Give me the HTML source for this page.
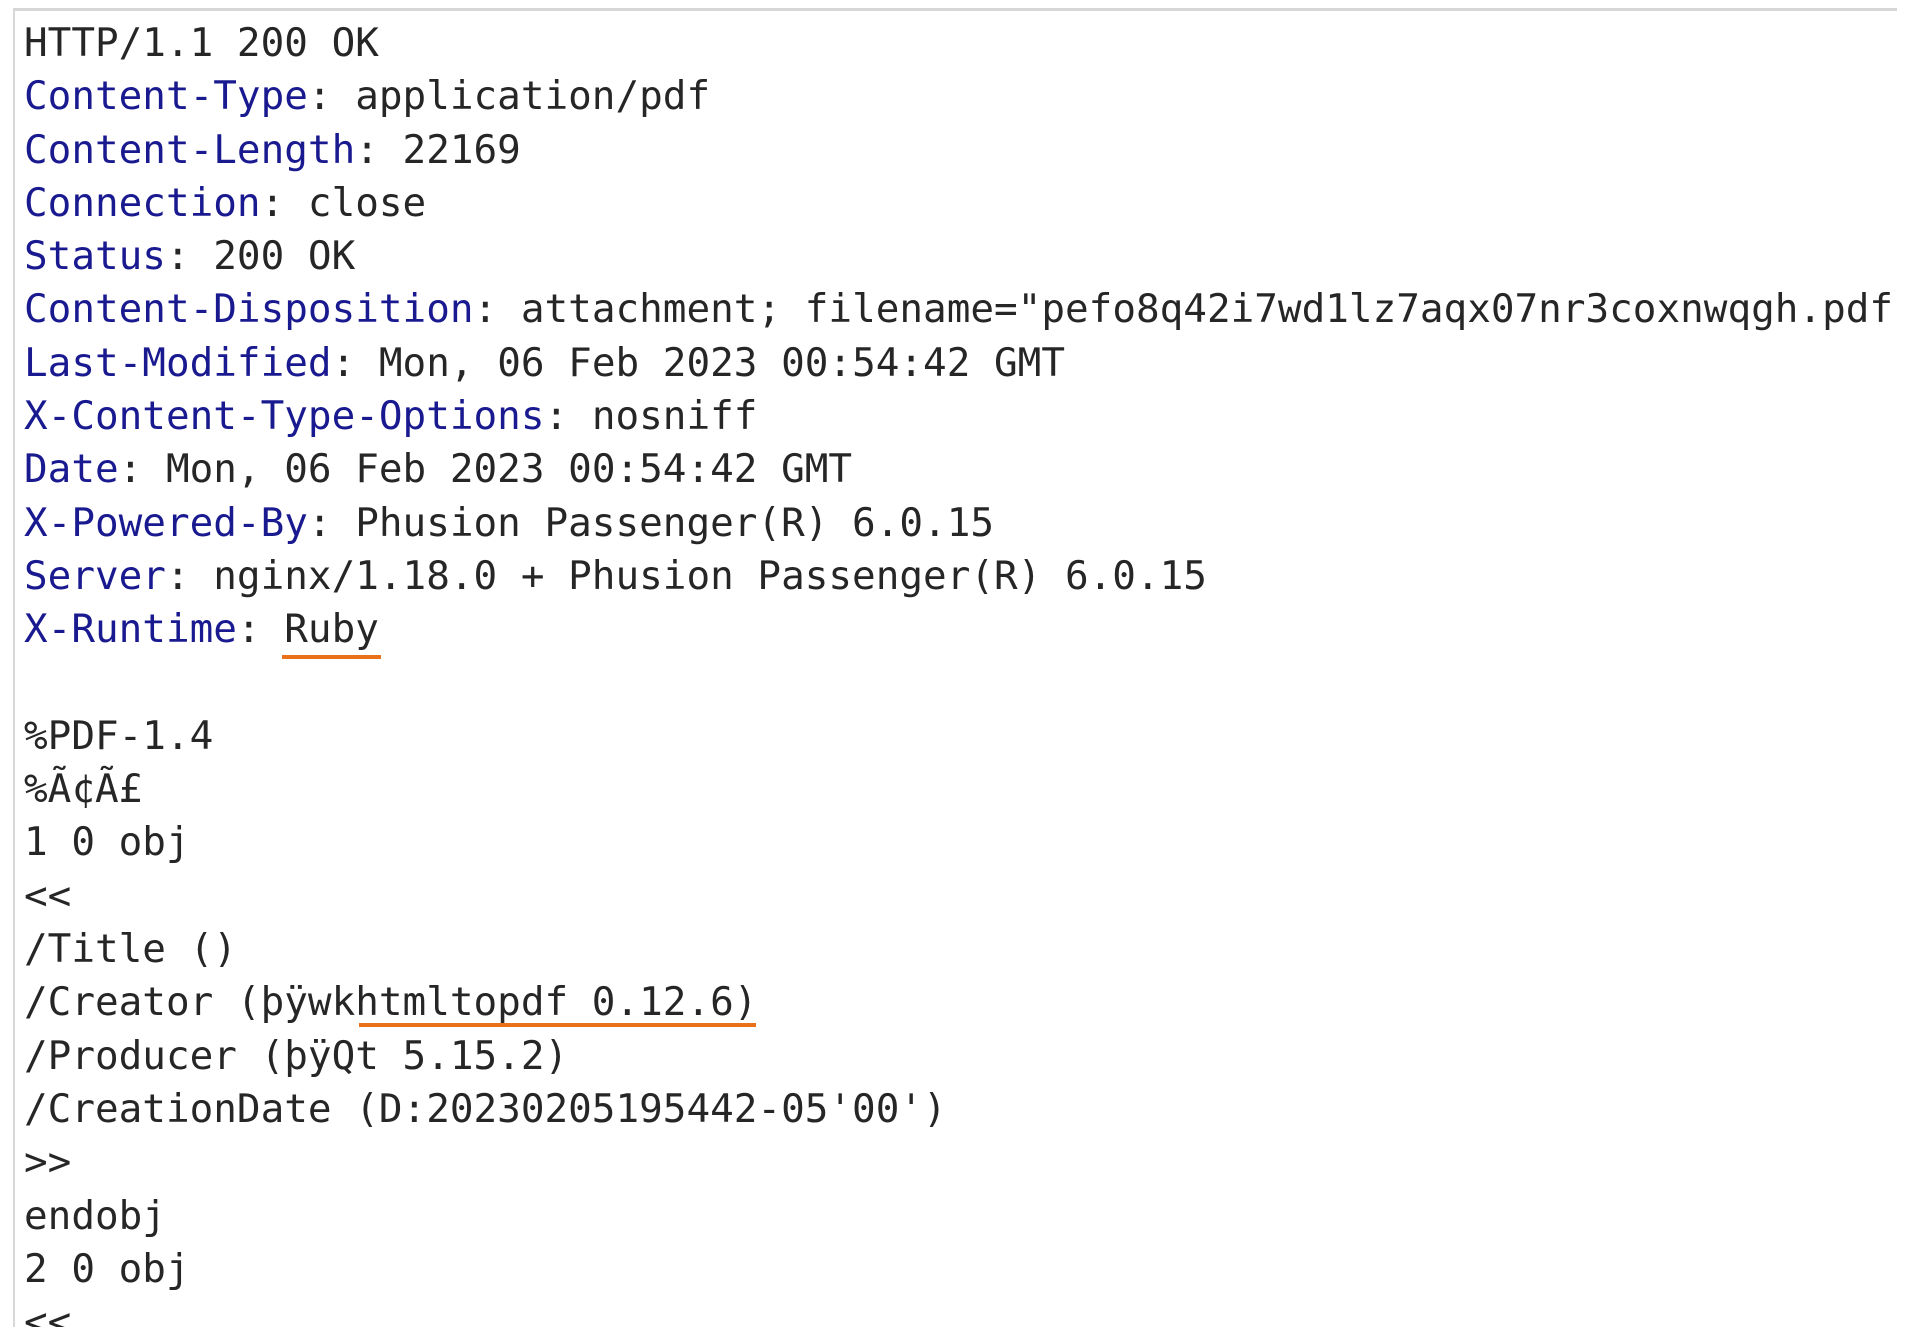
<!DOCTYPE html>
<html><head><meta charset="utf-8"><style>
html,body{margin:0;padding:0;background:#fff;width:1911px;height:1330px;overflow:hidden}
.box{position:absolute;left:13px;top:8px;width:1882px;height:1316px;border-top:3px solid #d4d6d8;border-left:2px solid #d8d8d8;overflow:hidden}
pre{margin:0;position:absolute;left:9px;top:6px;font-family:"DejaVu Sans Mono","Liberation Mono",monospace;font-size:39.3px;line-height:53.3px;color:#262626;white-space:pre}
.k{color:#1a1a90}
.u{position:absolute;height:4px;background:#e8711a}
</style></head><body>
<div class="box"><pre>HTTP/1.1 200 OK
<span class="k">Content-Type</span>: application/pdf
<span class="k">Content-Length</span>: 22169
<span class="k">Connection</span>: close
<span class="k">Status</span>: 200 OK
<span class="k">Content-Disposition</span>: attachment; filename="pefo8q42i7wd1lz7aqx07nr3coxnwqgh.pdf"
<span class="k">Last-Modified</span>: Mon, 06 Feb 2023 00:54:42 GMT
<span class="k">X-Content-Type-Options</span>: nosniff
<span class="k">Date</span>: Mon, 06 Feb 2023 00:54:42 GMT
<span class="k">X-Powered-By</span>: Phusion Passenger(R) 6.0.15
<span class="k">Server</span>: nginx/1.18.0 + Phusion Passenger(R) 6.0.15
<span class="k">X-Runtime</span>: Ruby

%PDF-1.4
%Ã¢Ã£
1 0 obj
&lt;&lt;
/Title ()
/Creator (þÿwkhtmltopdf 0.12.6)
/Producer (þÿQt 5.15.2)
/CreationDate (D:20230205195442-05'00')
&gt;&gt;
endobj
2 0 obj
&lt;&lt;
</pre></div>
<div class="u" style="left:282px;top:655px;width:99px"></div>
<div class="u" style="left:359px;top:1023px;width:397px"></div>
</body></html>
